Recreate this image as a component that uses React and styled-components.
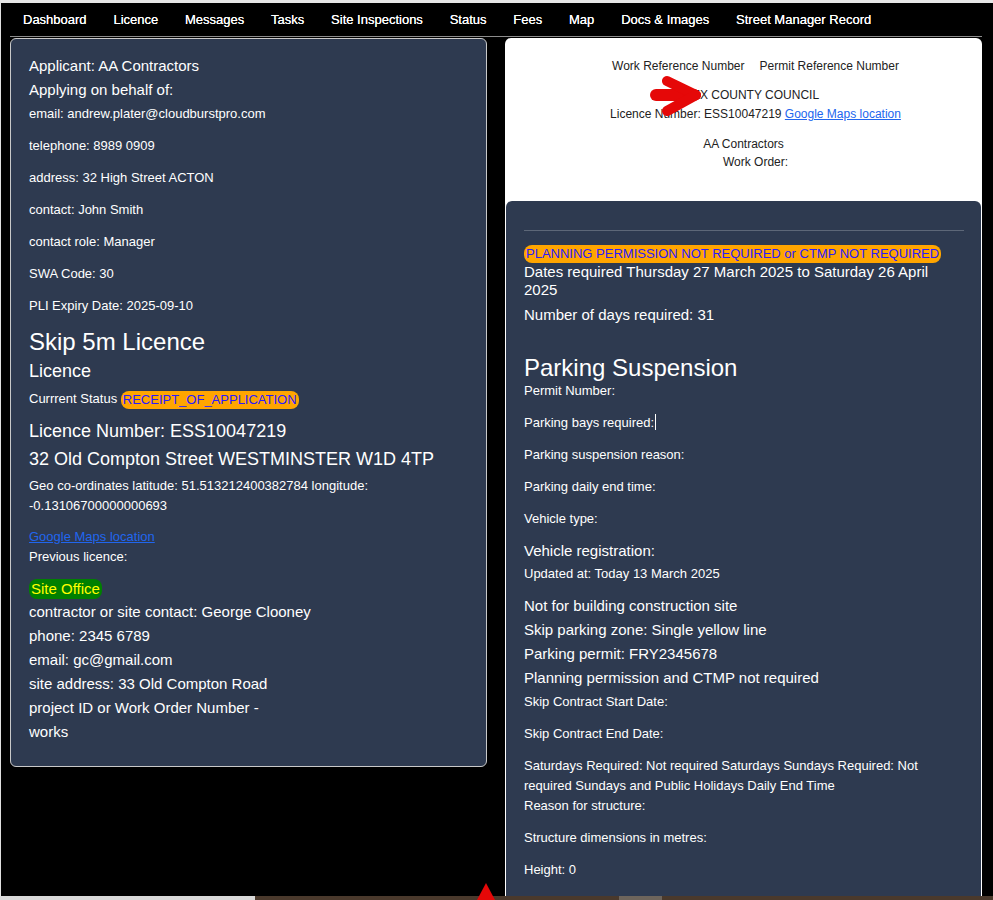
import React from 'react';
import styled, { createGlobalStyle } from 'styled-components';

const GlobalStyle = createGlobalStyle`
  html, body {
    margin: 0;
    padding: 0;
    background: #000;
    overflow: hidden;
  }
  body {
    font-family: "Liberation Sans", Arial, sans-serif;
  }
`;

const navItems = [
  'Dashboard',
  'Licence',
  'Messages',
  'Tasks',
  'Site Inspections',
  'Status',
  'Fees',
  'Map',
  'Docs & Images',
  'Street Manager Record',
];

const App = () => {
  return (
    <Page>
      <GlobalStyle />
      <NavBar>
        {navItems.map((item) => (
          <NavLink key={item} href="#">
            {item}
          </NavLink>
        ))}
      </NavBar>
      <Main>
        <Card>
          <Line>Applicant: AA Contractors</Line>
          <Line>Applying on behalf of:</Line>
          <Field $top={2}>email: andrew.plater@cloudburstpro.com</Field>
          <Field>telephone: 8989 0909</Field>
          <Field>address: 32 High Street ACTON</Field>
          <Field>contact: John Smith</Field>
          <Field>contact role: Manager</Field>
          <Field>SWA Code: 30</Field>
          <Field>PLI Expiry Date: 2025-09-10</Field>
          <Title>Skip 5m Licence</Title>
          <SubTitle $top={3}>Licence</SubTitle>
          <Field $top={6} $bottom={0}>
            Currrent Status <Pill>RECEIPT_OF_APPLICATION</Pill>
          </Field>
          <SubTitle $top={10}>Licence Number: ESS10047219</SubTitle>
          <SubTitle $top={4}>32 Old Compton Street WESTMINSTER W1D 4TP</SubTitle>
          <Field $top={5} $bottom={0}>
            Geo co-ordinates latitude: 51.513212400382784 longitude:
            -0.13106700000000693
          </Field>
          <Field $top={11} $bottom={0}>
            <MapLink href="#">Google Maps location</MapLink>
            <br />
            Previous licence:
          </Field>
          <Line $top={9}>
            <Pill $bg="#008000" $color="#ffff00" $size={15}>
              Site Office
            </Pill>
          </Line>
          <Line>contractor or site contact: George Clooney</Line>
          <Line>phone: 2345 6789</Line>
          <Line>email: gc@gmail.com</Line>
          <Line>site address: 33 Old Compton Road</Line>
          <Line>project ID or Work Order Number -</Line>
          <Line>works</Line>
        </Card>

        <RightColumn>
          <Header>
            <HeaderLine $top={0} $shift={24}>
              <span>Work Reference Number</span>
              <HeaderGap />
              <span>Permit Reference Number</span>
            </HeaderLine>
            <HeaderLine $top={13}>ESSEX COUNTY COUNCIL</HeaderLine>
            <HeaderLine $top={3} $shift={24}>
              Licence Number: ESS10047219 <MapLink href="#">Google Maps location</MapLink>
            </HeaderLine>
            <HeaderLine $top={14}>AA Contractors</HeaderLine>
            <HeaderLine $top={2} $shift={24}>
              Work Order:
            </HeaderLine>
            <Arrow width="56" height="44" viewBox="0 0 56 44">
              <g stroke="#e50808" strokeLinecap="round" fill="none">
                <line x1="6" y1="20" x2="44" y2="20" strokeWidth="12" />
                <line x1="17" y1="6" x2="46" y2="20" strokeWidth="10" />
                <line x1="46" y1="20" x2="17" y2="36" strokeWidth="10" />
              </g>
            </Arrow>
          </Header>

          <DarkPanel>
            <Rule />
            <Field $top={12} $bottom={0}>
              <Pill>PLANNING PERMISSION NOT REQUIRED or CTMP NOT REQUIRED</Pill>
            </Field>
            <Text $lh={18}>
              Dates required Thursday 27 March 2025 to Saturday 26 April 2025
            </Text>
            <Text $lh={18} $top={7}>
              Number of days required: 31
            </Text>
            <Title $top={31} $lh={26}>
              Parking Suspension
            </Title>
            <Field>Permit Number:</Field>
            <Field>
              Parking bays required:
              <Caret />
            </Field>
            <Field>Parking suspension reason:</Field>
            <Field>Parking daily end time:</Field>
            <Field>Vehicle type:</Field>
            <Text $lh={20}>Vehicle registration:</Text>
            <Field $top={3} $bottom={10}>
              Updated at: Today 13 March 2025
            </Field>
            <Line>Not for building construction site</Line>
            <Line>Skip parking zone: Single yellow line</Line>
            <Line>Parking permit: FRY2345678</Line>
            <Line>Planning permission and CTMP not required</Line>
            <Field $top={2}>Skip Contract Start Date:</Field>
            <Field>Skip Contract End Date:</Field>
            <Field>
              Saturdays Required: Not required Saturdays Sundays Required: Not
              required Sundays and Public Holidays Daily End Time
              <br />
              Reason for structure:
            </Field>
            <Field>Structure dimensions in metres:</Field>
            <Field>Height: 0</Field>
          </DarkPanel>
        </RightColumn>
      </Main>

      <ScreenEdge />
      <Pointer width="18" height="17" viewBox="0 0 18 17">
        <path d="M9 0 L18 17 L0 17 Z" fill="#e50808" />
      </Pointer>
    </Page>
  );
};

export default App;

const Page = styled.div`
  min-height: 897px;
  background: #000;
  border-top: 3px solid #e6e6e6;
  border-left: 1px solid #e0e0e0;
  box-sizing: border-box;
`;

const NavBar = styled.nav`
  display: flex;
  align-items: center;
  gap: 26.8px;
  height: 33px;
  padding-left: 22px;
`;

const NavLink = styled.a`
  color: #fff;
  font-size: 13px;
  text-decoration: none;
  text-shadow: 0 0 0.4px #fff;
  white-space: nowrap;
`;

const Main = styled.div`
  display: grid;
  grid-template-columns: 1fr 1fr;
  gap: 18px;
  align-items: start;
  margin: 0 11px 0 9px;
  padding-top: 1px;
  border-top: 1px solid #8c8c8c;
`;

const Card = styled.div`
  background: #2e3a50;
  color: #fff;
  border: 1px solid #c9c9c9;
  border-radius: 6px;
  padding: 15px 18px 22px;
`;

const Line = styled.div`
  font-size: 15px;
  line-height: 24px;
  margin-top: ${(p) => p.$top || 0}px;
`;

const Text = styled.div`
  font-size: 15px;
  line-height: ${(p) => p.$lh || 24}px;
  margin-top: ${(p) => p.$top || 0}px;
`;

const Field = styled.p`
  font-size: 13px;
  line-height: 20px;
  margin: ${(p) => p.$top || 0}px 0 ${(p) => (p.$bottom === undefined ? 12 : p.$bottom)}px;
`;

const Title = styled.h2`
  font-size: 24px;
  font-weight: normal;
  line-height: ${(p) => p.$lh || 28}px;
  margin: ${(p) => p.$top || 0}px 0 0;
`;

const SubTitle = styled.div`
  font-size: 18px;
  line-height: 24px;
  margin-top: ${(p) => p.$top || 0}px;
`;

const Pill = styled.span`
  display: inline-block;
  background: ${(p) => p.$bg || '#ffa500'};
  color: ${(p) => p.$color || '#2a1aff'};
  font-size: ${(p) => p.$size || 13}px;
  line-height: ${(p) => (p.$size || 13) + 3}px;
  padding: 1px 2px;
  border-radius: 8px;
  vertical-align: middle;
`;

const MapLink = styled.a`
  color: #2166ee;
  text-decoration: underline;
`;

const RightColumn = styled.div`
  background: #fff;
  border-radius: 6px;
  padding: 0 1px;
`;

const Header = styled.div`
  position: relative;
  text-align: center;
  color: #222;
  font-size: 12px;
  line-height: 16px;
  padding: 20px 0 31px;
`;

const HeaderLine = styled.div`
  margin-top: ${(p) => p.$top || 0}px;
  padding-left: ${(p) => p.$shift || 0}px;
`;

const HeaderGap = styled.span`
  display: inline-block;
  width: 15px;
`;

const Arrow = styled.svg`
  position: absolute;
  left: 144px;
  top: 37px;
`;

const DarkPanel = styled.div`
  background: #2e3a50;
  color: #fff;
  border-radius: 6px 6px 0 0;
  padding: 29px 17px 20px 18px;
`;

const Rule = styled.hr`
  border: 0;
  border-top: 1px solid #5d6778;
  margin: 0;
`;

const Caret = styled.span`
  display: inline-block;
  width: 1px;
  height: 16px;
  margin-left: 1px;
  background: #fff;
  vertical-align: -3px;
`;

const ScreenEdge = styled.div`
  position: fixed;
  left: 0;
  right: 0;
  bottom: 0;
  height: 4px;
  background: linear-gradient(
    to right,
    #d9d9d9 0 255px,
    #4a392c 255px 619px,
    #6e655c 619px 662px,
    #4a392c 662px
  );
`;

const Pointer = styled.svg`
  position: fixed;
  left: 477px;
  bottom: 0;
`;
